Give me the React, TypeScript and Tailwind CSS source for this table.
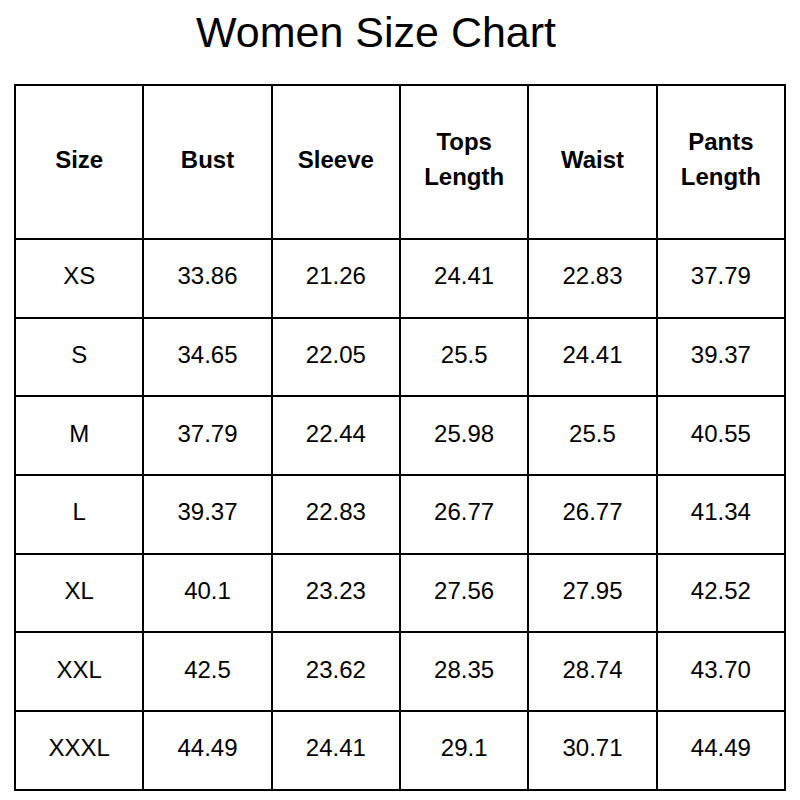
import React from "react";

const headers: string[][] = [
  ["Size"],
  ["Bust"],
  ["Sleeve"],
  ["Tops", "Length"],
  ["Waist"],
  ["Pants", "Length"],
];

const rows: string[][] = [
  ["XS", "33.86", "21.26", "24.41", "22.83", "37.79"],
  ["S", "34.65", "22.05", "25.5", "24.41", "39.37"],
  ["M", "37.79", "22.44", "25.98", "25.5", "40.55"],
  ["L", "39.37", "22.83", "26.77", "26.77", "41.34"],
  ["XL", "40.1", "23.23", "27.56", "27.95", "42.52"],
  ["XXL", "42.5", "23.62", "28.35", "28.74", "43.70"],
  ["XXXL", "44.49", "24.41", "29.1", "30.71", "44.49"],
];

export default function App() {
  return (
    <div
      className="w-[800px] h-[800px] bg-white text-black"
      style={{ fontFamily: '"Liberation Sans", Arial, sans-serif' }}
    >
      <div className="flex justify-center pr-[48px] h-[84px] pt-[6px]">
        <h1 className="text-[43px] leading-[52px] font-normal">Women Size Chart</h1>
      </div>
      <div className="px-[14px]">
        <table className="w-[772px] table-fixed border-collapse border-2 border-black">
          <thead>
            <tr className="h-[154px]">
              {headers.map((h, i) => (
                <th
                  key={i}
                  className="border-2 border-black text-center align-middle font-bold text-[24px] leading-[35px] p-0 pb-[6px]"
                >
                  {h.map((line, j) => (
                    <div key={j}>{line}</div>
                  ))}
                </th>
              ))}
            </tr>
          </thead>
          <tbody>
            {rows.map((r, i) => (
              <tr key={i} className="h-[78.7px]">
                {r.map((c, j) => (
                  <td
                    key={j}
                    className="border-2 border-black text-center align-middle text-[24px] p-0 pb-[4px]"
                  >
                    {c}
                  </td>
                ))}
              </tr>
            ))}
          </tbody>
        </table>
      </div>
    </div>
  );
}
